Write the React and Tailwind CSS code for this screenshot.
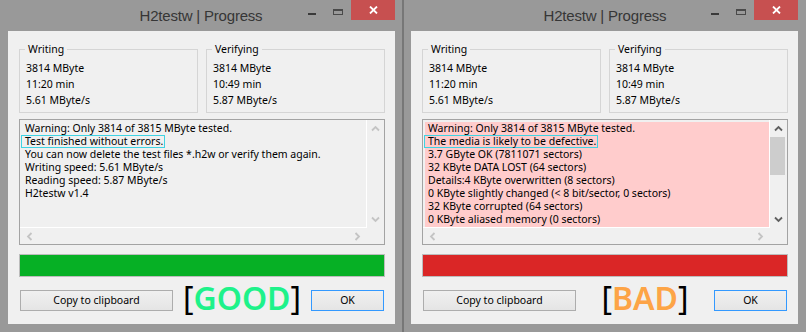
import React from "react";

function Chevron({ dir, color }) {
  const pts = {
    up: "1,5.5 4.5,2 8,5.5",
    down: "1,1.5 4.5,5 8,1.5",
    left: "5.5,1 2,4.5 5.5,8",
    right: "1.5,1 5,4.5 1.5,8",
  }[dir];
  const vert = dir === "up" || dir === "down";
  return (
    <svg width={vert ? 9 : 7} height={vert ? 7 : 9} viewBox={vert ? "0 0 9 7" : "0 0 7 9"}>
      <polyline points={pts} fill="none" stroke={color} strokeWidth="1.8" />
    </svg>
  );
}

function TitleBar({ rightCls }) {
  return (
    <div className="relative flex h-[31px] shrink-0 items-center justify-center">
      <span className="font-['Liberation_Sans',sans-serif] text-[15px] leading-[20px] tracking-[-0.2px] text-[#363636]">
        H2testw | Progress
      </span>
      <div className={`absolute top-0 ${rightCls} flex items-start`}>
        <div className="mt-[13px] h-[2px] w-[8px] bg-[#3a3a3a]" />
        <div className="ml-[17px] mt-[9px] h-[6px] w-[10px] border border-t-2 border-[#4a4a4a]" />
        <div className="ml-[8px] flex h-[20px] w-[44px] items-center justify-center bg-[#c75050]">
          <svg width="9" height="8" viewBox="0 0 9 8">
            <path d="M1 0.5 L8 7.5 M8 0.5 L1 7.5" stroke="#fff" strokeWidth="1.8" fill="none" />
          </svg>
        </div>
      </div>
    </div>
  );
}

function Group({ title, lines }) {
  return (
    <fieldset className="flex-1 border border-[#d5d5d5] pl-[5px] pb-[4px]">
      <legend className="px-[3px] leading-[14px]">{title}</legend>
      <div className="ml-[1px] pt-[4px] leading-[16px]">
        {lines.map((l) => (
          <div key={l}>{l}</div>
        ))}
      </div>
    </fieldset>
  );
}

function Memo({ lines, focusIdx, bad }) {
  const arrowV = bad ? "#606060" : "#c4c4c4";
  const arrowH = "#c4c4c4";
  return (
    <div className="mt-[6px] flex h-[126px] flex-col border border-[#a3a3a3]">
      <div className="flex min-h-0 flex-1">
        <div className="flex-1 overflow-hidden border-b border-r border-white pl-[2px] pt-[2px]">
          <div className={`h-full pl-[3px] leading-[13px] ${bad ? "bg-[#ffcccc]" : ""}`}>
            {lines.map((l, i) =>
              i === focusIdx ? (
                <div
                  key={i}
                  className="-ml-[4px] h-[13px] w-fit whitespace-nowrap border border-[#3fd3e3] pl-[3px] pr-[1px] leading-[11px]"
                >
                  {l}
                </div>
              ) : (
                <div key={i} className="h-[13px] whitespace-nowrap">
                  {l}
                </div>
              )
            )}
          </div>
        </div>
        <div className="flex w-[17px] flex-col">
          <div className="flex h-[17px] items-center justify-center">
            <Chevron dir="up" color={arrowV} />
          </div>
          <div className="flex-1">
            {bad && <div className="mr-[2px] h-[38px] bg-[#cdcdcd]" />}
          </div>
          <div className="flex h-[17px] items-center justify-center">
            <Chevron dir="down" color={arrowV} />
          </div>
        </div>
      </div>
      <div className="flex h-[16px] shrink-0">
        <div className="flex w-[347px] items-center justify-between px-[6px]">
          <Chevron dir="left" color={arrowH} />
          <Chevron dir="right" color={arrowH} />
        </div>
        <div className="w-[17px]" />
      </div>
    </div>
  );
}

function Win({ bad }) {
  const goodLines = [
    "Warning: Only 3814 of 3815 MByte tested.",
    "Test finished without errors.",
    "You can now delete the test files *.h2w or verify them again.",
    "Writing speed: 5.61 MByte/s",
    "Reading speed: 5.87 MByte/s",
    "H2testw v1.4",
  ];
  const badLines = [
    "Warning: Only 3814 of 3815 MByte tested.",
    "The media is likely to be defective.",
    "3.7 GByte OK (7811071 sectors)",
    "32 KByte DATA LOST (64 sectors)",
    "Details:4 KByte overwritten (8 sectors)",
    "0 KByte slightly changed (< 8 bit/sector, 0 sectors)",
    "32 KByte corrupted (64 sectors)",
    "0 KByte aliased memory (0 sectors)",
  ];
  return (
    <div
      className={`flex h-[332px] w-[403px] flex-col bg-[#999999] ${
        bad ? "border-l border-[#777777]" : "border-r border-[#777777]"
      }`}
    >
      <TitleBar rightCls={bad ? "right-[8px]" : "right-[7px]"} />
      <div
        className={`mb-[8px] flex flex-1 flex-col bg-[#f0f0f0] pl-[11px] pr-[10px] font-['Noto_Sans',sans-serif] text-[10.5px] text-black ${
          bad ? "ml-[7px] mr-[8px]" : "ml-[8px] mr-[7px]"
        }`}
      >
        <div className="mt-[11px] flex gap-[8px]">
          <Group title="Writing" lines={["3814 MByte", "11:20 min", "5.61 MByte/s"]} />
          <Group title="Verifying" lines={["3814 MByte", "10:49 min", "5.87 MByte/s"]} />
        </div>
        <Memo lines={bad ? badLines : goodLines} focusIdx={1} bad={bad} />
        <div
          className={`mt-[9px] h-[23px] border border-[#bcbcbc] ${
            bad ? "bg-[#da2626]" : "bg-[#06b025]"
          }`}
        />
        <div className="mt-[13px] flex h-[21px] items-center">
          <div className="ml-[1px] flex h-[21px] w-[153px] items-center justify-center border border-[#adadad] bg-gradient-to-b from-[#f0f0f0] to-[#e5e5e5]">
            Copy to clipboard
          </div>
          <div className="flex flex-1 -translate-y-[3px] items-center justify-center text-[32px] font-semibold leading-[21px]">
            <span className="font-normal text-black">[</span>
            <span className={bad ? "text-[#fda446]" : "text-[#1ef28a]"}>{bad ? "BAD" : "GOOD"}</span>
            <span className="font-normal text-black">]</span>
          </div>
          <div className="mr-[1px] flex h-[21px] w-[73px] items-center justify-center border border-[#3399ff] bg-gradient-to-b from-[#f0f0f0] to-[#e5e5e5]">
            OK
          </div>
        </div>
      </div>
    </div>
  );
}

export default function App() {
  return (
    <div className="flex h-[332px] w-[806px]">
      <Win />
      <Win bad />
    </div>
  );
}
